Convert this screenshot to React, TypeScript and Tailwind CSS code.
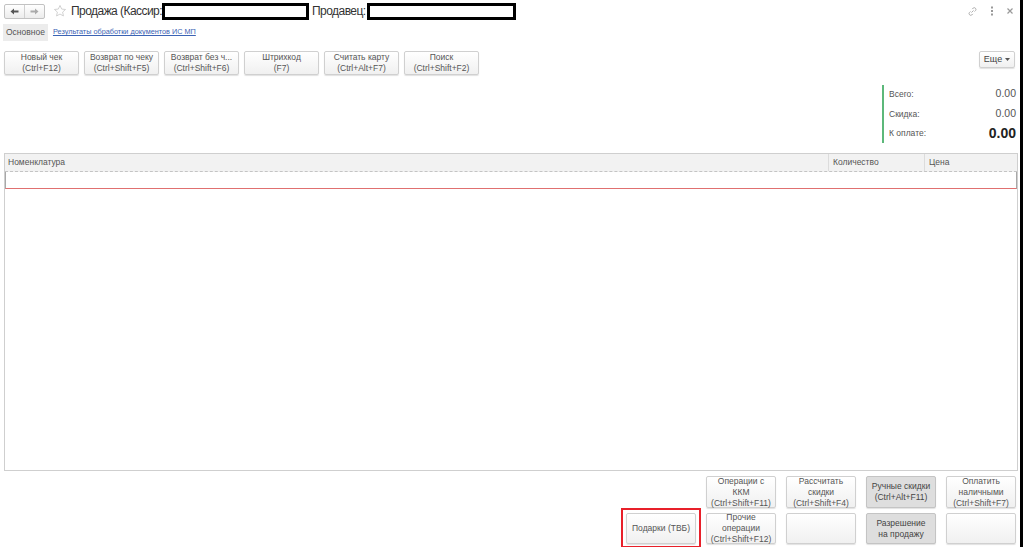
import React from "react";

const toolbar = [
  ["Новый чек", "(Ctrl+F12)"],
  ["Возврат по чеку", "(Ctrl+Shift+F5)"],
  ["Возврат без ч...", "(Ctrl+Shift+F6)"],
  ["Штрихкод", "(F7)"],
  ["Считать карту", "(Ctrl+Alt+F7)"],
  ["Поиск", "(Ctrl+Shift+F2)"],
];

function Btn({
  lines,
  dark = false,
  className = "",
}: {
  lines: string[];
  dark?: boolean;
  className?: string;
}) {
  return (
    <div
      className={
        "flex flex-col items-center justify-center rounded-[2px] border text-center text-[8.5px] leading-[11px] shadow-[0_1px_1px_rgba(0,0,0,0.12)] " +
        (dark
          ? "border-[#c4c4c4] bg-[#dedede] text-[#444] "
          : "border-[#d0d0d0] bg-gradient-to-b from-white to-[#f0f0f0] text-[#555] ") +
        className
      }
    >
      {lines.map((l, i) => (
        <span key={i} className="whitespace-nowrap">
          {l}
        </span>
      ))}
    </div>
  );
}

function Star() {
  return (
    <svg width="14" height="14" viewBox="0 0 24 24" fill="none" stroke="#c8c8c8" strokeWidth="1.4">
      <path d="M12 2.5l2.9 6.2 6.6.7-5 4.5 1.4 6.6L12 17.2l-5.9 3.3 1.4-6.6-5-4.5 6.6-.7z" />
    </svg>
  );
}

export default function App() {
  return (
    <div className="flex h-[547px] w-[1023px] flex-col overflow-hidden border-r-[3px] border-black bg-white font-['Liberation_Sans',Arial,sans-serif] text-[#4d4d4d]">
      {/* Window title bar */}
      <div className="flex h-[22px] items-center pl-[4px] pr-[6px]">
        <div className="flex h-[15px] w-[41px] rounded-[2px] border border-[#c2c2c2] bg-gradient-to-b from-white to-[#ececec]">
          <div className="flex w-[20px] items-center justify-center border-r border-[#d0d0d0]">
            <svg width="9" height="7" viewBox="0 0 9 7">
              <path d="M0.5 3.5L4 0.5V2.5H8.5V4.5H4V6.5Z" fill="#555" />
            </svg>
          </div>
          <div className="flex flex-1 items-center justify-center">
            <svg width="9" height="7" viewBox="0 0 9 7">
              <path d="M8.5 3.5L5 0.5V2.5H0.5V4.5H5V6.5Z" fill="#aaa" />
            </svg>
          </div>
        </div>
        <div className="ml-[8px] flex items-center">
          <Star />
        </div>
        <div className="ml-[4px] flex items-center text-[12px] tracking-[-0.55px] text-[#333]">
          <span>Продажа (Кассир:</span>
          <div className="h-[17px] w-[147px] border-[3px] border-black bg-white" />
          <span className="ml-[3px]">Продавец:</span>
          <div className="ml-[1px] h-[17px] w-[149px] border-[3px] border-black bg-white" />
        </div>
        <div className="ml-auto flex items-center">
          <svg width="11" height="11" viewBox="0 0 16 16" fill="none" stroke="#aaa" strokeWidth="1.4">
            <path d="M6.5 9.5l3-3" />
            <path d="M7.5 4.5l1.5-1.5a2.5 2.5 0 013.5 3.5L11 8" />
            <path d="M8.5 11.5L7 13a2.5 2.5 0 01-3.5-3.5L5 8" />
          </svg>
          <svg width="4" height="10" viewBox="0 0 4 10" className="ml-[12px]">
            <rect x="1" y="0.5" width="2" height="2" fill="#999" />
            <rect x="1" y="4" width="2" height="2" fill="#999" />
            <rect x="1" y="7.5" width="2" height="2" fill="#999" />
          </svg>
          <svg width="8" height="8" viewBox="0 0 8 8" stroke="#999" strokeWidth="1.2" className="ml-[12px]">
            <path d="M1.5 1.5l5 5M6.5 1.5l-5 5" />
          </svg>
        </div>
      </div>

      {/* Form tabs */}
      <div className="mt-[2px] flex h-[17px] items-center pl-[3px]">
        <div className="flex h-full items-center bg-[#ececec] px-[3px] text-[8.5px] text-[#555]">Основное</div>
        <a className="ml-[5px] text-[7.3px] text-[#3b63b4] underline decoration-[#3b63b4]">
          Результаты обработки документов ИС МП
        </a>
      </div>

      {/* Command bar */}
      <div className="mt-[10px] flex items-start px-[4px]">
        <div className="flex gap-[5px]">
          {toolbar.map((t, i) => (
            <Btn key={i} lines={t} className="h-[24px] w-[75px]" />
          ))}
        </div>
        <div className="ml-auto mr-[1px] flex h-[17px] w-[36px] items-center justify-center gap-[3px] rounded-[2px] border border-[#d0d0d0] bg-gradient-to-b from-white to-[#f0f0f0] text-[9px] text-[#444] shadow-[0_1px_1px_rgba(0,0,0,0.12)]">
          <span>Еще</span>
          <svg width="5" height="3" viewBox="0 0 5 3">
            <path d="M0 0h5L2.5 3z" fill="#555" />
          </svg>
        </div>
      </div>

      {/* Totals */}
      <div className="mt-[10px] flex justify-end pr-[4px]">
        <div className="flex h-[58px] w-[134px] flex-col border-l-2 border-[#5cb87a] pl-[5px] pt-[3px] text-[8.5px] text-[#555]">
          <div className="flex h-[12px] items-center justify-between">
            <span>Всего:</span>
            <span className="text-[10.5px] text-[#555]">0.00</span>
          </div>
          <div className="mt-[8px] flex h-[12px] items-center justify-between">
            <span>Скидка:</span>
            <span className="text-[10.5px] text-[#555]">0.00</span>
          </div>
          <div className="mt-[5px] flex h-[16px] items-center justify-between">
            <span>К оплате:</span>
            <span className="text-[14px] font-bold leading-[16px] text-[#222]">0.00</span>
          </div>
        </div>
      </div>

      {/* Goods table */}
      <div className="ml-[4px] mr-[2px] mt-[10px] flex h-[318px] flex-col border border-[#cfcfcf]">
        <div className="flex h-[18px] border-b border-dashed border-[#c4c4c4] bg-[#f2f2f2] text-[8.5px] text-[#555]">
          <div className="flex flex-1 items-center pl-[3px]">Номенклатура</div>
          <div className="flex w-[96px] items-center border-l border-[#dcdcdc] pl-[4px]">Количество</div>
          <div className="flex w-[93px] items-center border-l border-[#dcdcdc] pl-[4px]">Цена</div>
        </div>
        <div className="h-[17px] border-x border-b border-x-[#a8a8a8] border-b-[#e07070]" />
        <div className="flex-1" />
      </div>

      {/* Action buttons */}
      <div className="mt-[5px] flex justify-end pr-[4px]">
        <div className="grid grid-cols-[70px_70px_70px_70px_70px] grid-rows-[32px_31px] gap-x-[10px] gap-y-[5px]">
          <div />
          <Btn lines={["Операции с", "ККМ", "(Ctrl+Shift+F11)"]} />
          <Btn lines={["Рассчитать", "скидки", "(Ctrl+Shift+F4)"]} />
          <Btn lines={["Ручные скидки", "(Ctrl+Alt+F11)"]} dark />
          <Btn lines={["Оплатить", "наличными", "(Ctrl+Shift+F7)"]} />
          <div className="relative">
            <Btn lines={["Подарки (ТВБ)"]} className="h-full" />
            <div className="pointer-events-none absolute -bottom-[4px] -left-[5px] -right-[5px] -top-[5px] border-2 border-[#e8202a]" />
          </div>
          <Btn lines={["Прочие", "операции", "(Ctrl+Shift+F12)"]} />
          <Btn lines={[]} />
          <Btn lines={["Разрешение", "на продажу"]} dark />
          <Btn lines={[]} />
        </div>
      </div>
    </div>
  );
}
